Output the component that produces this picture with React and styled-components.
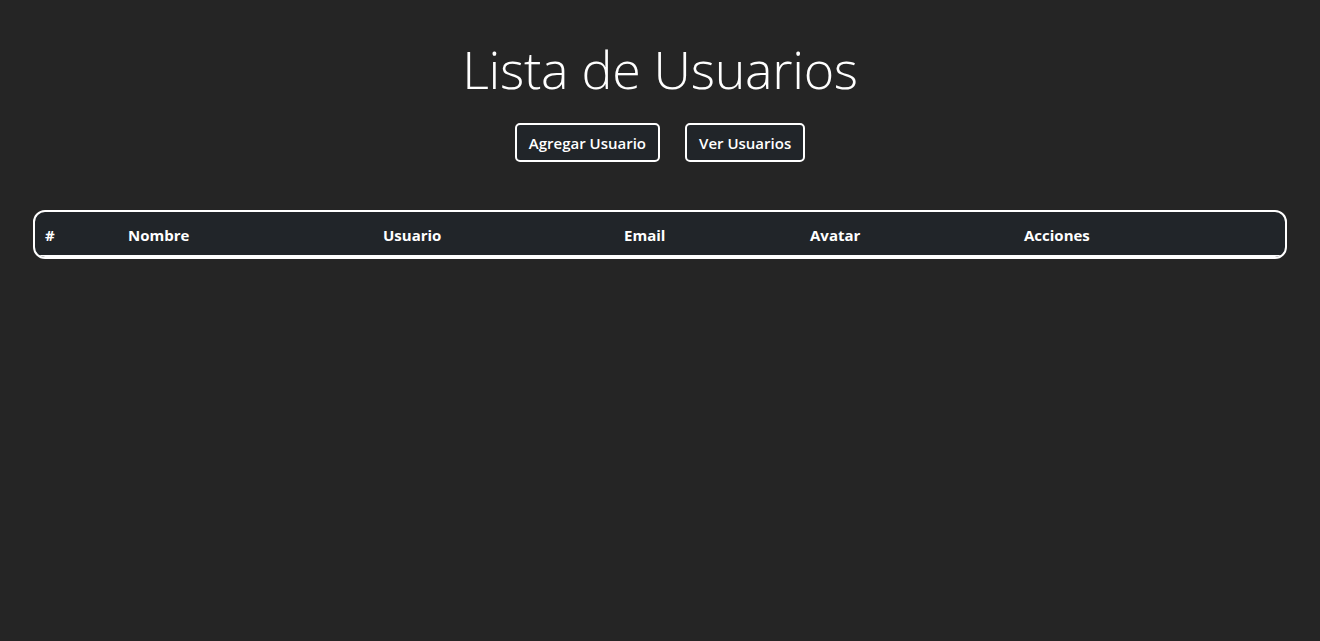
import styled, { createGlobalStyle } from 'styled-components';

const GlobalStyle = createGlobalStyle`
  body {
    margin: 0;
    background: #252525;
    font-family: "Open Sans", "Noto Sans", sans-serif;
    color: #fff;
  }
`;

const columns = [
  { label: '#', width: 83 },
  { label: 'Nombre', width: 255 },
  { label: 'Usuario', width: 241 },
  { label: 'Email', width: 186 },
  { label: 'Avatar', width: 214 },
  { label: 'Acciones' },
];

const App = () => {
  return (
    <Page>
      <GlobalStyle />
      <Title>Lista de Usuarios</Title>
      <ButtonsBlock>
        <Button>Agregar Usuario</Button>
        <Button>Ver Usuarios</Button>
      </ButtonsBlock>
      <TableWrap>
        <Table>
          <thead>
            <tr>
              {columns.map((c) => (
                <Th key={c.label} $width={c.width}>{c.label}</Th>
              ))}
            </tr>
          </thead>
        </Table>
      </TableWrap>
    </Page>
  );
};

const Page = styled.div`
  min-height: 641px;
  padding: 29px 33px 0 33px;
  display: flex;
  flex-direction: column;
  align-items: center;
`;

const Title = styled.h1`
  margin: 0;
  font-size: 52px;
  font-weight: 300;
  line-height: 80px;
  letter-spacing: -0.3px;
`;

const ButtonsBlock = styled.div`
  display: flex;
  gap: 25px;
  margin-top: 14px;
`;

const Button = styled.button`
  font-family: inherit;
  font-size: 15px;
  font-weight: 600;
  color: #fff;
  background: #212529;
  border: 2px solid #fff;
  border-radius: 5px;
  height: 39px;
  padding: 0 12px;
  cursor: pointer;
`;

const TableWrap = styled.div`
  align-self: stretch;
  margin-top: 48px;
  border: 2px solid #fff;
  border-radius: 12px;
  overflow: hidden;
  background: #212529;
`;

const Table = styled.table`
  width: 100%;
  border-collapse: collapse;
  table-layout: fixed;
`;

const Th = styled.th`
  box-sizing: border-box;
  width: ${(p) => (p.$width ? `${p.$width}px` : 'auto')};
  text-align: left;
  padding: 11px 10px 9px;
  font-size: 15px;
  font-weight: 700;
  color: #fff;
  height: 44px;
  border-bottom: 2px solid #fff;
`;

export default App;
